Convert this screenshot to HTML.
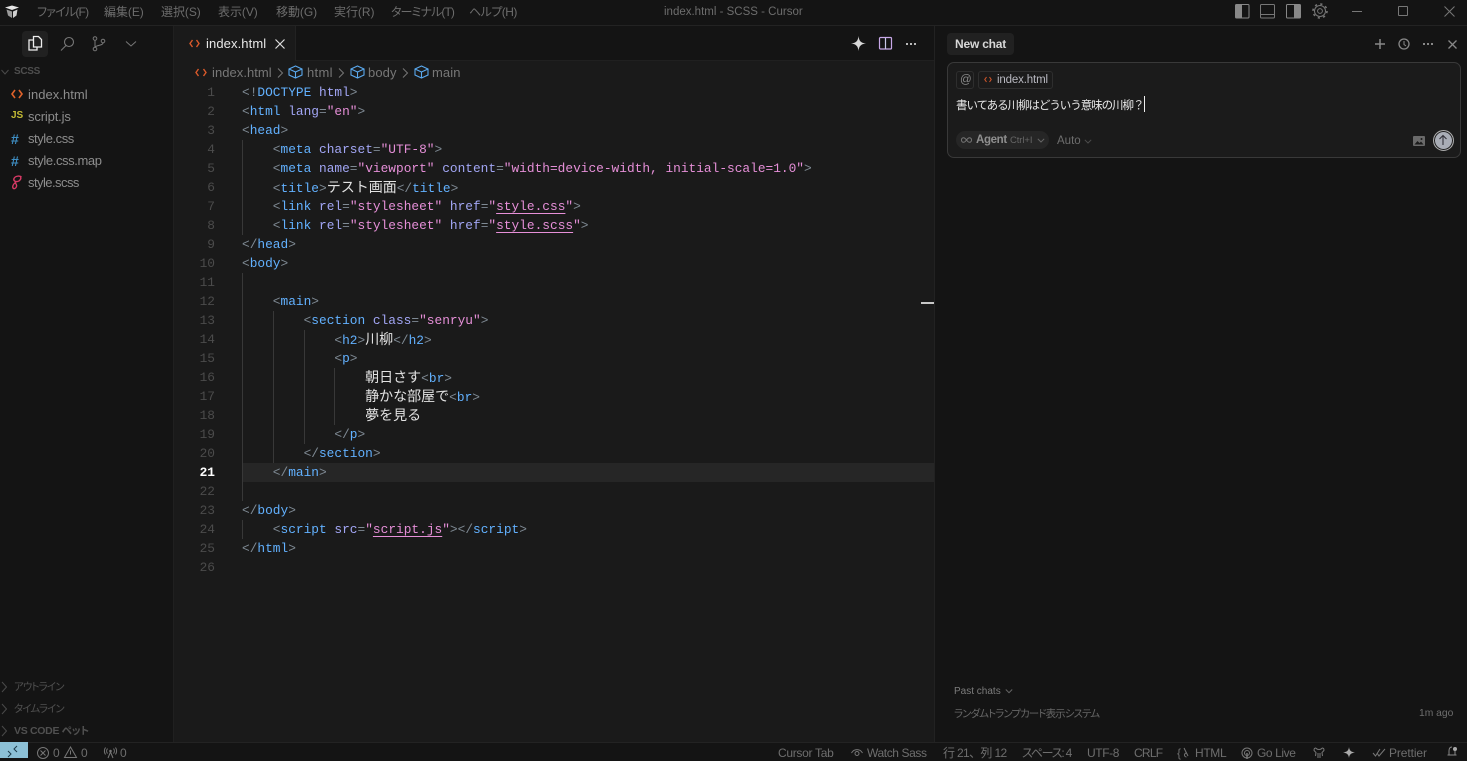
<!DOCTYPE html>
<html lang="ja"><head><meta charset="utf-8"><title>index.html - SCSS - Cursor</title>
<style>
html,body{margin:0;padding:0;background:#141414;}
body{width:1467px;height:758px;overflow:hidden;position:relative;font-family:"Liberation Sans","Noto Sans CJK JP",sans-serif;font-size:12px;color:#8a8a8a;}
.x{position:absolute;white-space:pre;}
.r{position:absolute;}
svg{position:absolute;overflow:visible;}
.m{top:3px;height:18px;line-height:18px;font-size:12px;color:#6c6c6c;letter-spacing:-.05px;}
.p{font-feature-settings:"palt";}
.f{left:28px;font-size:13px;line-height:20px;height:20px;color:#8d8d8d;letter-spacing:-.2px;}
.ln{position:absolute;left:180px;width:35px;text-align:right;font:12.83px/19px "Liberation Mono",monospace;color:#4b4b4b;height:19px;}
.c{position:absolute;left:242px;height:19px;font:12.83px/19px "Liberation Mono","Noto Sans CJK JP",monospace;white-space:pre;color:#7f8a94;}
.t{color:#62b1ff}.a{color:#a2a6f5}.s{color:#e68fd8}.e{color:#8c8f96}
.u{color:#e68fd8;text-decoration:underline;text-underline-offset:3px;text-decoration-thickness:1px;}
.j{font:14px/19px "Liberation Sans","Noto Sans CJK JP",sans-serif;color:#e2e2e2;}
.g{position:absolute;width:1px;background:#383838;}
.st{top:746px;height:12px;line-height:15px;font-size:12px;color:#6e6e6e;letter-spacing:-.1px;}
.bc{top:64px;height:18px;line-height:18px;font-size:13px;color:#777;letter-spacing:-.1px;}
.lb{left:14px;font-size:10.5px;color:#505050;height:14px;line-height:14px;font-feature-settings:"palt";letter-spacing:-.9px;}
</style></head><body>

<!-- title bar -->
<div class="r" style="left:0;top:0;width:1467px;height:25px;background:#141414;border-bottom:1px solid #232323;"></div>
<svg style="left:5px;top:5px" width="15" height="14" viewBox="0 0 15 14"><path d="M0 2.500L7 .5l7 2-7 2.500z" fill="#e6e6e6"/><path d="M1.500 4.500L7 6.500V13L3 10.500z" fill="#9a9a9a"/><path d="M12.500 4.500L8 6.500V13l3.500-2.500z" fill="#d0d0d0"/></svg>
<div class="x m p" style="left:37px;letter-spacing:-.8px">ファイル(F)</div>
<div class="x m" style="left:104px">編集(E)</div>
<div class="x m" style="left:161px">選択(S)</div>
<div class="x m" style="left:218px">表示(V)</div>
<div class="x m" style="left:276px">移動(G)</div>
<div class="x m" style="left:334px">実行(R)</div>
<div class="x m p" style="left:391px;letter-spacing:-.9px">ターミナル(T)</div>
<div class="x m p" style="left:469px;letter-spacing:-.55px">ヘルプ(H)</div>
<div class="x" style="left:664px;top:3px;line-height:18px;font-size:11.5px;color:#6d6d6d;">index.html - SCSS - Cursor</div>
<svg style="left:1235px;top:4px" width="15" height="15"><rect x=".5" y=".5" width="13.500" height="13.500" rx="1" fill="none" stroke="#888"/><rect x="1" y="1" width="6" height="12.500" fill="#888"/></svg>
<svg style="left:1260px;top:4px" width="15" height="15"><rect x=".5" y=".5" width="14" height="13.500" rx="1" fill="none" stroke="#777"/><path d="M1 10.500h13" stroke="#777"/></svg>
<svg style="left:1286px;top:4px" width="15" height="15"><rect x=".5" y=".5" width="14" height="13.500" rx="1" fill="none" stroke="#888"/><rect x="8" y="1" width="6" height="12.500" fill="#888"/></svg>
<svg style="left:1312px;top:3px" width="16" height="16" viewBox="0 0 16 16"><circle cx="8" cy="8" r="2.400" fill="none" stroke="#777"/><circle cx="8" cy="8" r="5.500" fill="none" stroke="#777" stroke-width="1"/><circle cx="8" cy="8" r="7" fill="none" stroke="#777" stroke-width="1.600" stroke-dasharray="2.200 3.300"/></svg>
<div class="r" style="left:1352px;top:11px;width:10px;height:1px;background:#777"></div>
<div class="r" style="left:1398px;top:6px;width:8px;height:8px;border:1px solid #777;border-radius:1px"></div>
<svg style="left:1444px;top:6px" width="11" height="11"><path d="M.5.500l10 10M10.500.500l-10 10" stroke="#777" fill="none"/></svg>

<!-- sidebar -->
<div class="r" style="left:0;top:26px;width:173px;height:716px;background:#141414;border-right:1px solid #202020;"></div>
<div class="r" style="left:22px;top:31px;width:26px;height:26px;background:#212121;border-radius:4px"></div>
<svg style="left:28px;top:36px" width="15" height="15"><path d="M5.500 .5h5l3 3v7.500h-8z" fill="none" stroke="#eee" stroke-width="1.300"/><path d="M5 4H1v10h8v-3" fill="none" stroke="#eee" stroke-width="1.300"/></svg>
<svg style="left:60px;top:36px" width="16" height="16"><circle cx="9" cy="6" r="4.500" fill="none" stroke="#777" stroke-width="1.100"/><path d="M6 9.500L1 14.500" stroke="#777" stroke-width="1.100"/></svg>
<svg style="left:92px;top:36px" width="14" height="16"><circle cx="3" cy="2.500" r="1.800" fill="none" stroke="#777"/><circle cx="3" cy="13" r="1.800" fill="none" stroke="#777"/><circle cx="11" cy="5" r="1.800" fill="none" stroke="#777"/><path d="M3 4.500v6.500M11 7c0 2.500-6 2-8 4" fill="none" stroke="#777"/></svg>
<svg style="left:125px;top:40px" width="12" height="8"><path d="M1 1.500l5 4.500 5-4.500" fill="none" stroke="#777"/></svg>

<svg style="left:1px;top:69px" width="9" height="7"><path d="M.5 1l3.500 4 3.500-4" fill="none" stroke="#4a4a4a"/></svg>
<div class="x" style="left:14px;top:65px;line-height:14px;font-size:10px;font-weight:bold;color:#4e4e4e;letter-spacing:-.3px">SCSS</div>

<svg style="left:11px;top:89px" width="12" height="10"><path d="M4 1L1 5l3 4M8 1l3 4-3 4" fill="none" stroke="#e0622a" stroke-width="1.600"/></svg>
<div class="x f" style="top:85px;letter-spacing:.05px">index.html</div>
<div class="x" style="left:11px;top:110px;font-size:10px;line-height:12px;font-weight:bold;color:#c4bb35">JS</div>
<div class="x f" style="top:107px;letter-spacing:-.15px">script.js</div>
<div class="x" style="left:11px;top:132px;font-size:14px;line-height:14px;font-weight:bold;color:#3f8fc4">#</div>
<div class="x f" style="top:129px;letter-spacing:-.45px">style.css</div>
<div class="x" style="left:11px;top:154px;font-size:14px;line-height:14px;font-weight:bold;color:#3f8fc4">#</div>
<div class="x f" style="top:151px;letter-spacing:-.4px">style.css.map</div>
<svg style="left:11px;top:175px" width="12" height="15"><path d="M10.500 2C8 .3 4 1.200 3 3.500 2.200 5.500 4 7 6.500 6.500 9 6 10.500 3.500 9.500 2M5 7C3 8.500 1 11 2 13c.8 1.300 3 .5 3.500-1.500C5.900 10 5 8.500 4 8" fill="none" stroke="#d93a66" stroke-width="1.400"/></svg>
<div class="x f" style="top:173px;letter-spacing:-.55px">style.scss</div>

<svg style="left:1px;top:681px" width="7" height="12"><path d="M1 1l4.500 5L1 11" fill="none" stroke="#4a4a4a"/></svg>
<div class="x lb" style="top:680px">アウトライン</div>
<svg style="left:1px;top:703px" width="7" height="12"><path d="M1 1l4.500 5L1 11" fill="none" stroke="#4a4a4a"/></svg>
<div class="x lb" style="top:702px">タイムライン</div>
<svg style="left:1px;top:725px" width="7" height="12"><path d="M1 1l4.500 5L1 11" fill="none" stroke="#4a4a4a"/></svg>
<div class="x lb" style="top:724px;font-weight:bold;letter-spacing:-.3px">VS CODE ペット</div>

<!-- editor -->
<div class="r" style="left:174px;top:26px;width:760px;height:716px;background:#1a1a1a;border-right:1px solid #222;"></div>
<div class="r" style="left:174px;top:26px;width:760px;height:34px;background:#141414;border-bottom:1px solid #202020;"></div>
<div class="r" style="left:174px;top:26px;width:121px;height:35px;background:#1a1a1a;border-right:1px solid #222;"></div>
<svg style="left:189px;top:39px" width="11" height="9"><path d="M3.500 1L1 4.500 3.500 8M7.500 1L10 4.500 7.500 8" fill="none" stroke="#d9592a" stroke-width="1.400"/></svg>
<div class="x" style="left:206px;top:35px;line-height:18px;font-size:13px;color:#e8e8e8;letter-spacing:.1px">index.html</div>
<svg style="left:275px;top:39px" width="10" height="10"><path d="M.5.500l9 9M9.500.500l-9 9" stroke="#ddd" stroke-width="1.200"/></svg>
<svg style="left:851px;top:36px" width="15" height="15" viewBox="0 0 15 15"><path d="M7.500 0C8 5 10 7 15 7.500 10 8 8 10 7.500 15 7 10 5 8 0 7.500 5 7 7 5 7.500 0z" fill="#d8d8d8"/></svg>
<svg style="left:879px;top:37px" width="14" height="14"><rect x=".5" y=".5" width="12" height="11.500" rx="1" fill="none" stroke="#c8a8e8" stroke-width="1.200"/><path d="M6.500 1v11" stroke="#c8c8e8" stroke-width="1.200"/></svg>
<div class="r" style="left:906px;top:43px;width:2px;height:2px;background:#bbb;box-shadow:4px 0 #bbb,8px 0 #bbb"></div>

<!-- breadcrumb -->
<svg style="left:195px;top:68px" width="12" height="9"><path d="M3.500 1L1 4.500 3.500 8M8.500 1L11 4.500 8.500 8" fill="none" stroke="#d9592a" stroke-width="1.400"/></svg>
<div class="x bc" style="left:212px;letter-spacing:.05px">index.html</div>
<svg style="left:277px;top:68px" width="7" height="10"><path d="M1 .5l4.500 4.500L1 9.500" fill="none" stroke="#777"/></svg>
<svg style="left:288px;top:65px" width="15" height="14"><path d="M7.500 1L14 4v6l-6.500 3L1 10V4zM1 4l6.500 3L14 4M7.500 7v6" fill="none" stroke="#5aa9ee" stroke-width="1.100"/></svg>
<div class="x bc" style="left:307px;letter-spacing:.3px">html</div>
<svg style="left:338px;top:68px" width="7" height="10"><path d="M1 .5l4.500 4.500L1 9.500" fill="none" stroke="#777"/></svg>
<svg style="left:350px;top:65px" width="15" height="14"><path d="M7.500 1L14 4v6l-6.500 3L1 10V4zM1 4l6.500 3L14 4M7.500 7v6" fill="none" stroke="#5aa9ee" stroke-width="1.100"/></svg>
<div class="x bc" style="left:368px;letter-spacing:.1px">body</div>
<svg style="left:402px;top:68px" width="7" height="10"><path d="M1 .5l4.500 4.500L1 9.500" fill="none" stroke="#777"/></svg>
<svg style="left:414px;top:65px" width="15" height="14"><path d="M7.500 1L14 4v6l-6.500 3L1 10V4zM1 4l6.500 3L14 4M7.500 7v6" fill="none" stroke="#5aa9ee" stroke-width="1.100"/></svg>
<div class="x bc" style="left:432px;letter-spacing:.1px">main</div>

<!-- current line -->
<div class="r" style="left:243px;top:463px;width:691px;height:19px;background:#262626"></div>
<div class="r" style="left:921px;top:302px;width:13px;height:2px;background:#c8c8c8"></div>

<!-- indent guides -->
<div class="g" style="left:242px;top:140px;height:95px"></div>
<div class="g" style="left:242px;top:273px;height:228px"></div>
<div class="g" style="left:242px;top:520px;height:19px"></div>
<div class="g" style="left:273px;top:311px;height:152px"></div>
<div class="g" style="left:304px;top:330px;height:114px"></div>
<div class="g" style="left:334px;top:368px;height:57px"></div>

<!-- line numbers -->
<div class="ln" style="top:83px">1</div><div class="ln" style="top:102px">2</div><div class="ln" style="top:121px">3</div><div class="ln" style="top:140px">4</div><div class="ln" style="top:159px">5</div><div class="ln" style="top:178px">6</div><div class="ln" style="top:197px">7</div><div class="ln" style="top:216px">8</div><div class="ln" style="top:235px">9</div><div class="ln" style="top:254px">10</div><div class="ln" style="top:273px">11</div><div class="ln" style="top:292px">12</div><div class="ln" style="top:311px">13</div><div class="ln" style="top:330px">14</div><div class="ln" style="top:349px">15</div><div class="ln" style="top:368px">16</div><div class="ln" style="top:387px">17</div><div class="ln" style="top:406px">18</div><div class="ln" style="top:425px">19</div><div class="ln" style="top:444px">20</div><div class="ln" style="top:463px;color:#fff;font-weight:bold">21</div><div class="ln" style="top:482px">22</div><div class="ln" style="top:501px">23</div><div class="ln" style="top:520px">24</div><div class="ln" style="top:539px">25</div><div class="ln" style="top:558px">26</div>

<!-- code -->
<div class="c" style="top:83px">&lt;!<span class="t">DOCTYPE</span> <span class="a">html</span>&gt;</div>
<div class="c" style="top:102px">&lt;<span class="t">html</span> <span class="a">lang</span>=<span class="s">"en"</span>&gt;</div>
<div class="c" style="top:121px">&lt;<span class="t">head</span>&gt;</div>
<div class="c" style="top:140px">    &lt;<span class="t">meta</span> <span class="a">charset</span>=<span class="s">"UTF-8"</span>&gt;</div>
<div class="c" style="top:159px">    &lt;<span class="t">meta</span> <span class="a">name</span>=<span class="s">"viewport"</span> <span class="a">content</span>=<span class="s">"width=device-width, initial-scale=1.0"</span>&gt;</div>
<div class="c" style="top:178px">    &lt;<span class="t">title</span>&gt;<span class="j">テスト画面</span>&lt;/<span class="t">title</span>&gt;</div>
<div class="c" style="top:197px">    &lt;<span class="t">link</span> <span class="a">rel</span>=<span class="s">"stylesheet"</span> <span class="a">href</span>=<span class="s">"<span class="u">style.css</span>"</span>&gt;</div>
<div class="c" style="top:216px">    &lt;<span class="t">link</span> <span class="a">rel</span>=<span class="s">"stylesheet"</span> <span class="a">href</span>=<span class="s">"<span class="u">style.scss</span>"</span>&gt;</div>
<div class="c" style="top:235px">&lt;/<span class="t">head</span>&gt;</div>
<div class="c" style="top:254px">&lt;<span class="t">body</span>&gt;</div>
<div class="c" style="top:292px">    &lt;<span class="t">main</span>&gt;</div>
<div class="c" style="top:311px">        &lt;<span class="t">section</span> <span class="a">class</span>=<span class="s">"senryu"</span>&gt;</div>
<div class="c" style="top:330px">            &lt;<span class="t">h2</span>&gt;<span class="j">川柳</span>&lt;/<span class="t">h2</span>&gt;</div>
<div class="c" style="top:349px">            &lt;<span class="t">p</span>&gt;</div>
<div class="c" style="top:368px">                <span class="j">朝日さす</span>&lt;<span class="t">br</span>&gt;</div>
<div class="c" style="top:387px">                <span class="j">静かな部屋で</span>&lt;<span class="t">br</span>&gt;</div>
<div class="c" style="top:406px">                <span class="j">夢を見る</span></div>
<div class="c" style="top:425px">            &lt;/<span class="t">p</span>&gt;</div>
<div class="c" style="top:444px">        &lt;/<span class="t">section</span>&gt;</div>
<div class="c" style="top:463px">    &lt;/<span class="t">main</span>&gt;</div>
<div class="c" style="top:501px">&lt;/<span class="t">body</span>&gt;</div>
<div class="c" style="top:520px">    &lt;<span class="t">script</span> <span class="a">src</span>=<span class="s">"<span class="u">script.js</span>"</span>&gt;&lt;/<span class="t">script</span>&gt;</div>
<div class="c" style="top:539px">&lt;/<span class="t">html</span>&gt;</div>

<!-- chat panel -->
<div class="r" style="left:947px;top:33px;width:67px;height:22px;background:#212121;border-radius:4px"></div>
<div class="x" style="left:955px;top:35px;line-height:18px;font-size:12px;font-weight:bold;color:#d8d8d8;letter-spacing:-.2px">New chat</div>
<svg style="left:1375px;top:39px" width="10" height="10"><path d="M5 0v10M0 5h10" stroke="#888" stroke-width="1.500"/></svg>
<svg style="left:1398px;top:38px" width="12" height="12"><circle cx="6" cy="6" r="5" fill="none" stroke="#888" stroke-width="1.300"/><path d="M6 3v3.500l2 1.500" fill="none" stroke="#888"/></svg>
<div class="r" style="left:1423px;top:43px;width:2px;height:2px;background:#888;box-shadow:4px 0 #888,8px 0 #888"></div>
<svg style="left:1448px;top:40px" width="9" height="9"><path d="M.5.500l8 8M8.500.500l-8 8" stroke="#888" stroke-width="1.300"/></svg>

<div class="r" style="left:947px;top:62px;width:512px;height:94px;background:#1b1b1b;border:1px solid #393939;border-radius:7px"></div>
<div class="r" style="left:956px;top:71px;width:16px;height:16px;border:1px solid #2e2e2e;border-radius:3px;"></div>
<div class="x" style="left:960px;top:72px;line-height:17px;font-size:11.500px;color:#8a8a8a">@</div>
<div class="r" style="left:978px;top:71px;width:73px;height:16px;border:1px solid #2e2e2e;border-radius:3px;"></div>
<svg style="left:984px;top:76px" width="8" height="7"><path d="M2.500 1L.8 3.500 2.500 6M5.500 1l1.700 2.500L5.500 6" fill="none" stroke="#c9532a" stroke-width="1.100"/></svg>
<div class="x" style="left:997px;top:72px;line-height:17px;font-size:11.500px;color:#b8b8c0;letter-spacing:-.15px">index.html</div>
<div class="x" style="left:956px;top:97px;line-height:18px;font-size:11.500px;color:#e8e8e8;letter-spacing:-1.05px">書いてある川柳はどういう意味の川柳？</div>
<div class="r" style="left:1144px;top:96px;width:1px;height:16px;background:#eee;"></div>

<div class="r" style="left:956px;top:131px;width:93px;height:18px;background:#262626;border-radius:9px"></div>
<svg style="left:961px;top:137px" width="12" height="6"><path d="M5.500 3C4 1 3 .7 2.500.7 1.300.7.500 1.700.500 3s.8 2.300 2 2.300c.5 0 1.500-.3 3-2.300s2.500-2.300 3-2.300c1.200 0 2 1 2 2.300s-.8 2.300-2 2.300c-.5 0-1.500-.3-3-2.300z" fill="none" stroke="#777" stroke-width="1"/></svg>
<div class="x" style="left:976px;top:131px;line-height:18px;font-size:11.500px;font-weight:bold;color:#8f8f8f;letter-spacing:-.35px">Agent</div>
<div class="x" style="left:1010px;top:132px;line-height:18px;font-size:9.500px;color:#666;letter-spacing:-.1px">Ctrl+I</div>
<svg style="left:1037px;top:138px" width="8" height="5"><path d="M.8.800L4 4 7.200.8" fill="none" stroke="#666"/></svg>
<div class="x" style="left:1057px;top:132px;line-height:18px;font-size:11.500px;color:#6e6e6e">Auto</div>
<svg style="left:1084px;top:139px" width="8" height="5"><path d="M.8.800L4 4 7.200.8" fill="none" stroke="#4c4c4c"/></svg>
<svg style="left:1413px;top:136px" width="12" height="10"><rect x="0" y="0" width="12" height="10" rx="1" fill="#6a6a6a"/><path d="M1.500 8.500l3-3.500 2 2 1.500-1.500 2.500 3z" fill="#1b1b1b"/><circle cx="8.500" cy="3" r="1" fill="#1b1b1b"/></svg>
<div class="r" style="left:1433px;top:130px;width:19px;height:19px;border-radius:50%;background:#a9adb6;border:1px solid #aaa;box-shadow:inset 0 0 0 1px #1b1b1b"></div>
<svg style="left:1438px;top:134px" width="10" height="12"><path d="M5 11V1.500M1.500 5L5 1.500 8.500 5" fill="none" stroke="#33323a" stroke-width="1.100"/></svg>

<div class="x" style="left:954px;top:684px;line-height:15px;font-size:10px;color:#7c7c7c">Past chats</div>
<svg style="left:1005px;top:689px" width="8" height="5"><path d="M.8.500L4 3.700 7.200.5" fill="none" stroke="#666"/></svg>
<div class="x" style="left:954px;top:707px;line-height:14px;font-size:10.500px;color:#666;font-feature-settings:&quot;palt&quot;;letter-spacing:-.95px">ランダムトランプカード表示システム</div>
<div class="x" style="left:1419px;top:707px;line-height:14px;font-size:10.300px;color:#6e6e6e">1m ago</div>

<!-- status bar -->
<div class="r" style="left:0;top:742px;width:1467px;height:16px;background:#141414;border-top:1px solid #232323;box-sizing:border-box"></div>
<div class="r" style="left:0;top:742px;width:28px;height:16px;background:#8cc0d6"></div>
<svg style="left:6px;top:744px" width="14" height="14"><path d="M2 7l3 3-3 3M11 2L8 5l3 3" fill="none" stroke="#1c3b4a" stroke-width="1"/></svg>
<svg style="left:37px;top:747px" width="13" height="13"><circle cx="6" cy="6" r="5.500" fill="none" stroke="#777"/><path d="M3.500 3.500l5 5M8.500 3.500l-5 5" stroke="#777"/></svg>
<div class="x st" style="left:53px">0</div>
<svg style="left:64px;top:746px" width="13" height="12"><path d="M6.500 1L12.500 11.500H.5z" fill="none" stroke="#777"/><path d="M6.500 4.500v4" stroke="#777"/></svg>
<div class="x st" style="left:81px">0</div>
<svg style="left:104px;top:747px" width="13" height="11"><circle cx="6.500" cy="4" r="1.300" fill="#777"/><path d="M6.500 5L4 11M6.500 5L9 11M3.500 1.500a4 4 0 000 5M9.500 1.500a4 4 0 010 5M1.500.5a6.500 6.500 0 000 7M11.500.5a6.500 6.500 0 010 7" fill="none" stroke="#777"/></svg>
<div class="x st" style="left:120px">0</div>

<div class="x st" style="left:778px;letter-spacing:-.3px">Cursor Tab</div>
<svg style="left:851px;top:748px" width="12" height="9"><path d="M.5 5C3 .5 9 .5 11.500 5" fill="none" stroke="#777"/><circle cx="6" cy="5.500" r="2" fill="none" stroke="#777"/></svg>
<div class="x st" style="left:867px;letter-spacing:-.4px">Watch Sass</div>
<div class="x st" style="left:943px;letter-spacing:-.65px">行 21、列 12</div>
<div class="x st p" style="left:1022px;letter-spacing:-1.2px">スペース: 4</div>
<div class="x st" style="left:1087px;letter-spacing:-.4px">UTF-8</div>
<div class="x st" style="left:1134px;letter-spacing:-.75px">CRLF</div>
<div class="x st" style="left:1177px">{</div>
<svg style="left:1183px;top:748px" width="7" height="10"><path d="M1 0l4 8M3.500 5a2 2 0 100 4" fill="none" stroke="#777"/></svg>
<div class="x st" style="left:1195px;letter-spacing:-.35px">HTML</div>
<svg style="left:1241px;top:747px" width="12" height="11"><circle cx="6" cy="6" r="5" fill="none" stroke="#777"/><circle cx="6" cy="6" r="2.500" fill="none" stroke="#777"/><path d="M6 6v6" stroke="#777" stroke-width="1.500"/></svg>
<div class="x st" style="left:1257px;letter-spacing:-.4px">Go Live</div>
<svg style="left:1313px;top:747px" width="12" height="11"><path d="M3 1c-2 0-2.500 2-1.500 3L3 5.500 2.500 9M9 1c2 0 2.500 2 1.500 3L9 5.500l.5 3.500M3 1c1 2 5 2 6 0M5 6v5M7 6v5" fill="none" stroke="#777"/></svg>
<svg style="left:1343px;top:747px" width="12" height="11"><path d="M6 0C6.400 3.500 8 5 12 5.500 8 6 6.400 7.500 6 11 5.600 7.500 4 6 0 5.500 4 5 5.600 3.500 6 0z" fill="#aaa"/></svg>
<svg style="left:1372px;top:748px" width="14" height="10"><path d="M1 5l2.500 3L8 1M5 5l2 3L13 1" fill="none" stroke="#777"/></svg>
<div class="x st" style="left:1389px">Prettier</div>
<svg style="left:1446px;top:746px" width="12" height="12"><path d="M6 1C3.500 1 3 3 3 5v4H1.500h9M9 3v6" fill="none" stroke="#888"/><circle cx="9" cy="3" r="2" fill="#aaa"/></svg>
</body></html>
